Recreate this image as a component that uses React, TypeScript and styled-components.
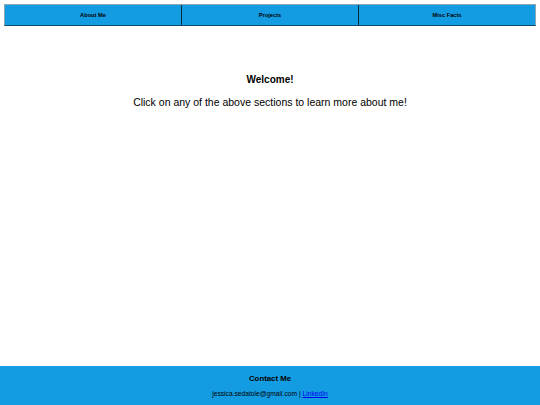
import * as React from 'react';
import styled, { createGlobalStyle } from 'styled-components';

const GlobalStyle = createGlobalStyle`
  html, body {
    margin: 0;
    padding: 0;
    height: 100%;
    font-family: "Liberation Sans", Arial, sans-serif;
    background: #fff;
  }
  #root {
    height: 100%;
  }
`;

const Page = styled.div`
  display: flex;
  flex-direction: column;
  min-height: 405px;
`;

const Nav = styled.nav`
  display: flex;
  margin: 4px 4px 0;
  border-top: 1px solid #8fa6b4;
  border-left: 1px solid #8fa6b4;
  border-right: 1px solid #8fa6b4;
  border-bottom: 1px solid #0d4a6e;
`;

const NavButton = styled.button<{ $last?: boolean }>`
  flex: 1;
  height: 20px;
  padding: 0;
  border: none;
  border-right: ${(p) => (p.$last ? 'none' : '1px solid #0a2a3f')};
  background: #139ce2;
  color: #000;
  font-family: "Liberation Sans", Arial, sans-serif;
  font-size: 5.7px;
  font-weight: bold;
  cursor: pointer;
`;

const Main = styled.main`
  flex: 1;
  display: flex;
  flex-direction: column;
  align-items: center;
  padding-top: 48px;
`;

const Title = styled.h2`
  margin: 0;
  font-size: 10px;
  font-weight: bold;
  color: #000;
`;

const Intro = styled.p`
  margin: 11px 0 0;
  font-size: 10.5px;
  color: #000;
`;

const Footer = styled.footer`
  background: #139ce2;
  height: 39px;
  display: flex;
  flex-direction: column;
  align-items: center;
  padding-top: 8px;
  box-sizing: border-box;
`;

const FooterTitle = styled.h3`
  margin: 0;
  font-size: 7.8px;
  font-weight: bold;
  color: #000;
`;

const FooterLine = styled.p`
  margin: 7px 0 0;
  font-size: 6.7px;
  color: #000;
`;

const FooterLink = styled.a`
  color: #0000ee;
  text-decoration: underline;
`;

export default function App() {
  return (
    <Page>
      <GlobalStyle />
      <Nav>
        <NavButton>About Me</NavButton>
        <NavButton>Projects</NavButton>
        <NavButton $last>Misc Facts</NavButton>
      </Nav>
      <Main>
        <Title>Welcome!</Title>
        <Intro>Click on any of the above sections to learn more about me!</Intro>
      </Main>
      <Footer>
        <FooterTitle>Contact Me</FooterTitle>
        <FooterLine>
          jessica.sedatole@gmail.com | <FooterLink href="#">LinkedIn</FooterLink>
        </FooterLine>
      </Footer>
    </Page>
  );
}
